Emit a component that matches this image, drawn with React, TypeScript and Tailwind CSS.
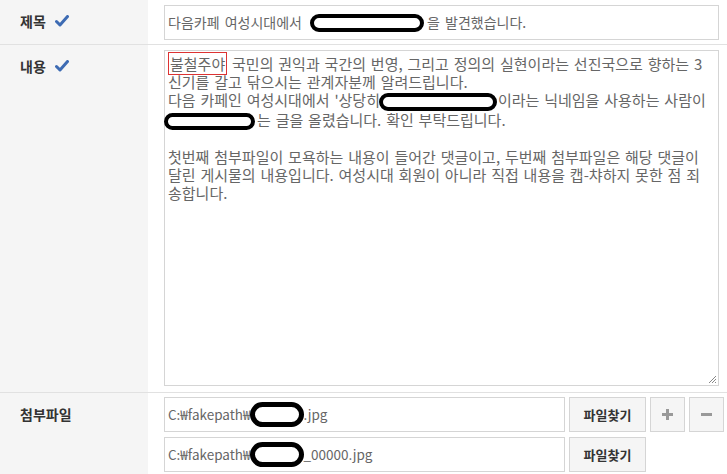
import React from 'react';

const font = { fontFamily: '"Noto Sans CJK KR", "Noto Sans", sans-serif' };

const Check = () => (
  <svg width="14" height="12" viewBox="0 0 14 12" className="ml-[9px]">
    <path d="M1.5 6.5 L5 10 L12.5 1.5" fill="none" stroke="#3d6bb3" strokeWidth="3" strokeLinecap="round" strokeLinejoin="round" />
  </svg>
);

// hand-drawn redaction mark over the text
const Blot = ({ w, h, className = '' }: { w: string; h: string; className?: string }) => (
  <span className={`inline-block align-middle rounded-full border-[4px] border-black bg-white ${w} ${h} ${className}`} />
);

const Label = ({ text, check = false }: { text: string; check?: boolean }) => (
  <div className="w-[148px] shrink-0 bg-[#f5f5f5] pl-5 pt-[11px]">
    <div className="flex items-center text-[14px] font-bold leading-5 text-[#333]">
      {text}
      {check && <Check />}
    </div>
  </div>
);

const FileRow = ({ tail, extra = false }: { tail: string; extra?: boolean }) => (
  <div className="flex h-[35px] items-stretch gap-[4px]">
    <div className="flex w-[401px] items-center border border-[#d5d5d5] bg-white pl-[3px] text-[13.5px] text-[#666] whitespace-nowrap">
      C:₩fakepath₩
      <Blot w="w-[54px]" h="h-[25px]" className="-ml-[1px] border-[5px]" />
      {tail}
    </div>
    <button className="w-[77px] border border-[#d5d5d5] bg-[#f5f5f5] text-[13px] font-bold text-[#333]">
      파일찾기
    </button>
    {extra && (
      <>
        <button className="flex w-[35px] items-center justify-center border border-[#d5d5d5] bg-[#f5f5f5]">
          <svg width="11" height="11" viewBox="0 0 11 11">
            <path d="M5.5 0 V11 M0 5.5 H11" stroke="#999" strokeWidth="3" />
          </svg>
        </button>
        <button className="flex w-[35px] items-center justify-center border border-[#d5d5d5] bg-[#f5f5f5]">
          <svg width="11" height="11" viewBox="0 0 11 11">
            <path d="M0 5.5 H11" stroke="#999" strokeWidth="3" />
          </svg>
        </button>
      </>
    )}
  </div>
);

export default function App() {
  return (
    <div className="h-[474px] w-[727px] overflow-hidden bg-white" style={font}>
      {/* 제목 */}
      <div className="flex h-[45px] border-b border-[#e1e1e1]">
        <Label text="제목" check />
        <div className="flex-1 pl-4 pr-2 pt-[5px]">
          <div className="flex h-[35px] items-center border border-[#d5d5d5] pl-[3px] text-[14px] text-[#666] whitespace-nowrap [word-spacing:2px]">
            다음카페 여성시대에서&nbsp;
            <Blot w="w-[114px]" h="h-[18px]" className="ml-[3px] mr-[3px]" />
            을 발견했습니다.
          </div>
        </div>
      </div>

      {/* 내용 */}
      <div className="flex h-[348px] border-b border-[#e1e1e1]">
        <Label text="내용" check />
        <div className="flex-1 pl-4 pr-2 pt-[5px]">
          <div className="relative h-[336px] border border-[#d5d5d5] pl-[3px] pt-[4px] text-[15px] leading-[18px] text-[#666] whitespace-nowrap [word-spacing:1.5px]">
            <div>
              <span className="border border-[#d33] px-[1px]">불철주야</span> 국민의 권익과 국간의 번영, 그리고 정의의 실현이라는 선진국으로 향하는 3
            </div>
            <div>신기를 갈고 닦으시는 관계자분께 알려드립니다.</div>
            <div>
              다음 카페인 여성시대에서 '상당히
              <Blot w="w-[118px]" h="h-[18px]" className="-ml-[1px] mr-[1px]" />
              이라는 닉네임을 사용하는 사람이
            </div>
            <div>
              <Blot w="w-[91px]" h="h-[17px]" className="-ml-[4px] mr-[2px]" />
              는 글을 올렸습니다. 확인 부탁드립니다.
            </div>
            <div>&nbsp;</div>
            <div>첫번째 첨부파일이 모욕하는 내용이 들어간 댓글이고, 두번째 첨부파일은 해당 댓글이</div>
            <div>달린 게시물의 내용입니다. 여성시대 회원이 아니라 직접 내용을 캡-챠하지 못한 점 죄</div>
            <div>송합니다.</div>
            <svg width="9" height="9" viewBox="0 0 9 9" className="absolute bottom-[1px] right-[1px]">
              <path d="M8 1 L1 8 M8 4 L4 8 M8 7 L7 8" stroke="#888" strokeWidth="1" />
            </svg>
          </div>
        </div>
      </div>

      {/* 첨부파일 */}
      <div className="flex h-[81px]">
        <Label text="첨부파일" />
        <div className="flex flex-1 flex-col gap-[5px] pl-4 pr-2 pt-[4px]">
          <FileRow tail=".jpg" extra />
          <FileRow tail="_00000.jpg" />
        </div>
      </div>
    </div>
  );
}
